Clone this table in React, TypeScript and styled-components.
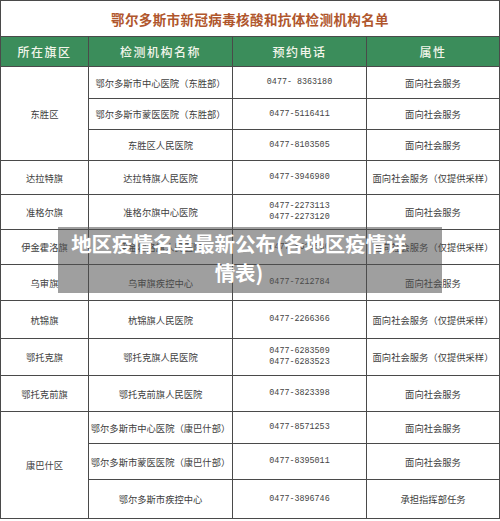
import React from "react";
import styled, { createGlobalStyle } from "styled-components";

const GlobalStyle = createGlobalStyle`
  body {
    margin: 0;
    background: #fff;
    font-family: "Noto Sans CJK SC", sans-serif;
  }
`;

const Page = styled.div`
  position: relative;
  width: 500px;
  height: 521px;
  overflow: hidden;
  background: #fff;
`;

const Table = styled.table`
  width: 499px;
  border-collapse: collapse;
  table-layout: fixed;
  color: #3a3a3a;

  td,
  th {
    border: 1px solid #4a4a4a;
    padding: 0;
    text-align: center;
    vertical-align: middle;
  }
`;

const TitleCell = styled.td`
  height: 35px;
  font-size: 13.5px;
  font-weight: 700;
  letter-spacing: 0.4px;
  color: #b0562c;
`;

const HeadCell = styled.th`
  height: 29px;
  background: #3b8d5b;
  color: #f2f5ea;
  font-size: 12px;
  font-weight: 500;
  letter-spacing: 1.5px;
`;

const Row = styled.tr<{ $h: number }>`
  height: ${(p) => p.$h}px;
`;

const TextCell = styled.td`
  font-size: 9.3px;
  line-height: 12px;
  color: #404040;
`;

const PhoneCell = styled.td`
  font-family: "Liberation Mono", monospace;
  font-size: 8.4px;
  line-height: 11px;
  color: #444;
`;

const Overlay = styled.div`
  position: absolute;
  left: 58px;
  top: 227px;
  width: 384px;
  height: 66px;
  background: rgba(80, 80, 80, 0.55);
  color: #fff;
  font-size: 20.5px;
  font-weight: 700;
  line-height: 29px;
  text-align: center;
  padding: 2px 22px 0 0;
  box-sizing: border-box;
`;

type Entry = {
  h: number;
  area?: string;
  span?: number;
  name: string;
  phones: string[];
  kind: string;
};

const SOCIAL = "面向社会服务";
const SAMPLE = "面向社会服务（仅提供采样）";

const rows: Entry[] = [
  { h: 32, area: "东胜区", span: 3, name: "鄂尔多斯市中心医院（东胜部）", phones: ["0477- 8363180"], kind: SOCIAL },
  { h: 31, name: "鄂尔多斯市蒙医医院（东胜部）", phones: ["0477-5116411"], kind: SOCIAL },
  { h: 31, name: "东胜区人民医院", phones: ["0477-8103505"], kind: SOCIAL },
  { h: 34, area: "达拉特旗", name: "达拉特旗人民医院", phones: ["0477-3946980"], kind: SAMPLE },
  { h: 35, area: "准格尔旗", name: "准格尔旗中心医院", phones: ["0477-2273113", "0477-2273120"], kind: SOCIAL },
  { h: 35, area: "伊金霍洛旗", name: "伊金霍洛旗人民医院", phones: ["0477-8612580"], kind: SAMPLE },
  { h: 36, area: "乌审旗", name: "乌审旗疾控中心", phones: ["0477-7212784"], kind: SOCIAL },
  { h: 38, area: "杭锦旗", name: "杭锦旗人民医院", phones: ["0477-2266366"], kind: SAMPLE },
  { h: 37, area: "鄂托克旗", name: "鄂托克旗人民医院", phones: ["0477-6283509", "0477-6283523"], kind: SAMPLE },
  { h: 36, area: "鄂托克前旗", name: "鄂托克前旗人民医院", phones: ["0477-3823398"], kind: SOCIAL },
  { h: 32, area: "康巴什区", span: 3, name: "鄂尔多斯市中心医院（康巴什部）", phones: ["0477-8571253"], kind: SOCIAL },
  { h: 36, name: "鄂尔多斯市蒙医医院（康巴什部）", phones: ["0477-8395011"], kind: SOCIAL },
  { h: 39, name: "鄂尔多斯市疾控中心", phones: ["0477-3896746"], kind: "承担指挥部任务" },
];

export default function App() {
  return (
    <Page>
      <GlobalStyle />
      <Table>
        <colgroup>
          <col style={{ width: 88 }} />
          <col style={{ width: 144 }} />
          <col style={{ width: 134 }} />
          <col style={{ width: 133 }} />
        </colgroup>
        <tbody>
          <tr>
            <TitleCell colSpan={4}>鄂尔多斯市新冠病毒核酸和抗体检测机构名单</TitleCell>
          </tr>
          <tr>
            <HeadCell>所在旗区</HeadCell>
            <HeadCell>检测机构名称</HeadCell>
            <HeadCell>预约电话</HeadCell>
            <HeadCell>属性</HeadCell>
          </tr>
          {rows.map((r, i) => (
            <Row key={i} $h={r.h}>
              {r.area && <TextCell rowSpan={r.span ?? 1}>{r.area}</TextCell>}
              <TextCell>{r.name}</TextCell>
              <PhoneCell>
                {r.phones.map((p) => (
                  <div key={p}>{p}</div>
                ))}
              </PhoneCell>
              <TextCell>{r.kind}</TextCell>
            </Row>
          ))}
        </tbody>
      </Table>
      <Overlay>
        地区疫情名单最新公布(各地区疫情详
        <br />
        情表)
      </Overlay>
    </Page>
  );
}
